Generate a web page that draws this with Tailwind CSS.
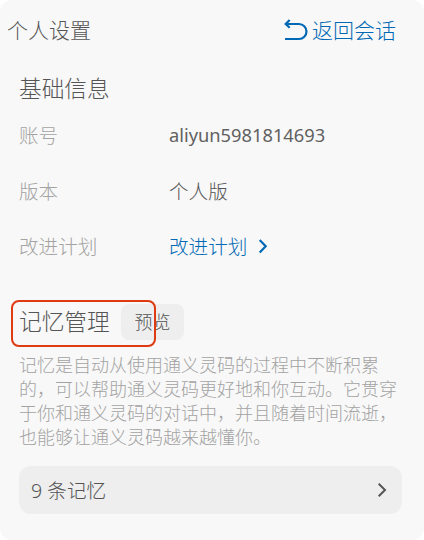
<!DOCTYPE html>
<html lang="zh-CN">
<head>
    <meta charset="UTF-8" />
    <meta name="viewport" content="width=device-width, initial-scale=1.0" />
    <title>个人设置</title>
    <script src="https://cdn.jsdelivr.net/npm/@tailwindcss/browser@4"></script>
</head>
<body class="bg-white">
    <div class="h-[540px] w-[424px] overflow-hidden rounded-xl bg-[#f8f8f8] font-['Noto_Sans','Noto_Sans_CJK_SC',sans-serif] font-light text-[#555555]">
        <header class="flex h-[60px] items-center justify-between pl-[7px] pr-7 text-[21px]">
            <h1 class="pt-px">个人设置</h1>
            <a class="flex items-center gap-1 text-[#0069b5]">
                <svg class="h-6 w-6" viewBox="0 0 24 24" fill="none" stroke="currentColor" stroke-width="2.2">
                    <path d="M1.5 6H15a7.5 7.5 0 0 1 0 15H1" />
                    <path d="M5.7 2L1.7 6l4 3.8" />
                </svg>
                <span class="pt-0.5">返回会话</span>
            </a>
        </header>

        <section class="px-[19px]">
            <h2 class="flex h-[57px] items-center pt-0.5 text-[22.7px]">基础信息</h2>
            <dl class="-mt-[10px] text-[19.6px]">
                <div class="flex h-14 items-center">
                    <dt class="w-[150px] pt-px text-[#a3a3a3]">账号</dt>
                    <dd class="text-[18.3px] font-normal text-[#616161]">aliyun5981814693</dd>
                </div>
                <div class="flex h-14 items-center">
                    <dt class="w-[150px] pt-px text-[#a3a3a3]">版本</dt>
                    <dd class="pt-px">个人版</dd>
                </div>
                <div class="flex h-14 items-center">
                    <dt class="w-[150px] text-[#a3a3a3]">改进计划</dt>
                    <dd class="flex items-center gap-[11px] text-[#0069b5]">
                        <span>改进计划</span>
                        <svg class="h-4 w-[10px]" viewBox="0 0 10 16" fill="none" stroke="currentColor" stroke-width="2.2">
                            <path d="M1.7 1L7.7 7.3l-6 6.2" />
                        </svg>
                    </dd>
                </div>
            </dl>
        </section>

        <section class="mt-[29px] px-[19px]">
            <div class="relative flex h-9 items-center gap-3">
                <h2 class="w-[90px] whitespace-nowrap text-[22.7px]">记忆管理</h2>
                <span class="flex h-9 w-[63px] items-center justify-center rounded-lg bg-[#eeeeee] text-[18px]">预览</span>
                <!-- highlight frame around the heading -->
                <div class="absolute -left-2 -top-1 h-[47px] w-[145px] rounded-lg border-2 border-[#df3b12]"></div>
            </div>
            <p class="mt-[13px] w-[384px] text-[18px] leading-6 text-[#a3a3a3]">
                记忆是自动从使用通义灵码的过程中不断积累<br>的，可以帮助通义灵码更好地和你互动。它贯穿<br>于你和通义灵码的对话中，并且随着时间流逝，<br>也能够让通义灵码越来越懂你。
            </p>
            <div class="mt-[17px] flex h-12 w-[383px] items-center justify-between rounded-xl bg-[#eeeeee] px-3 text-[19.6px]">
                <span class="pt-0.5">9 条记忆</span>
                <svg class="mr-[3px] h-4 w-[10px]" viewBox="0 0 10 16" fill="none" stroke="currentColor" stroke-width="2">
                    <path d="M1.7 1.7L8 8l-6.3 6.3" />
                </svg>
            </div>
        </section>
    </div>
</body>
</html>
